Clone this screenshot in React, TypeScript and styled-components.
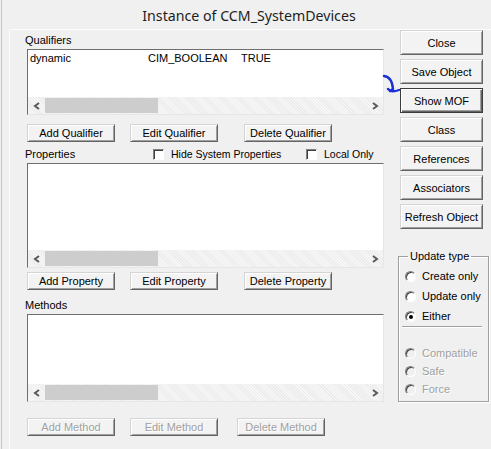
import styled, { createGlobalStyle, css } from "styled-components";

const GlobalStyle = createGlobalStyle`
  html, body {
    margin: 0;
    padding: 0;
    background: #f0f0f0;
  }
  * {
    box-sizing: border-box;
  }
`

const Window = styled.div`
  position: relative;
  width: 491px;
  height: 449px;
  background: #f0f0f0;
  border-left: 1px solid #c6c6c6;
  margin-left: 1px;
  font-family: "Liberation Sans", Arial, sans-serif;
  font-size: 11px;
  color: #000;
  overflow: hidden;
`

const Title = styled.div`
  height: 29px;
  display: flex;
  align-items: center;
  justify-content: center;
  padding-left: 4px;
  padding-top: 1px;
  font-family: "Noto Sans", "Open Sans", sans-serif;
  font-size: 14.2px;
  color: #1e1e1e;
`

const Frame = styled.div`
  display: flex;
  margin-left: 7px;
  height: 420px;
  border-top: 1px solid #fcfcfc;
  border-left: 1px solid #fcfcfc;
  padding-left: 17px;
`

const LeftColumn = styled.div`
  display: flex;
  flex-direction: column;
  width: 359px;
`

const SectionLabel = styled.div<{ $top: number }>`
  margin-top: ${p => p.$top}px;
  margin-left: -2px;
  height: 13px;
  line-height: 13px;
`

const HeaderRow = styled.div`
  display: grid;
  grid-template-columns: 126px 153px auto;
  align-items: center;
  margin-top: 6px;
  height: 13px;
  line-height: 13px;
`

const CheckLabel = styled.label`
  display: flex;
  align-items: center;
  gap: 7px;
  font-size: 10.5px;
  white-space: nowrap;
`

const CheckBox = styled.span`
  width: 11px;
  height: 11px;
  background: #fff;
  border: 1px solid;
  border-color: #808080 #fff #fff #808080;
  box-shadow: inset 1px 1px #404040;
`

const ListBox = styled.div<{ $height: number; $top: number }>`
  display: flex;
  flex-direction: column;
  margin-top: ${p => p.$top}px;
  width: 357px;
  height: ${p => p.$height}px;
  background: #fff;
  border: 1px solid;
  border-color: #6e6e6e #e6e6e6 #e6e6e6 #6e6e6e;
`

const ListBody = styled.div`
  flex: 1;
  padding: 1px 0 0 2px;
`

const ListRow = styled.div`
  display: grid;
  grid-template-columns: 118px 93px auto;
  height: 14px;
  line-height: 14px;
`

const ScrollBar = styled.div`
  display: flex;
  align-items: stretch;
  height: 17px;
  background: #f2f2f2;
  background-image: repeating-linear-gradient(45deg, #f7f7f7 0 1px, #ececec 1px 2px);
`

const ScrollArrow = styled.div`
  width: 17px;
  display: flex;
  align-items: center;
  justify-content: center;
`

const ScrollThumb = styled.div`
  width: 113px;
  margin: 1px 0;
  background: #cdcdcd;
`

const ScrollGap = styled.div`
  flex: 1;
`

const ButtonRow = styled.div<{ $top: number }>`
  display: flex;
  margin-top: ${p => p.$top}px;
  gap: 15px;
`

const raised = css`
  border: 1px solid;
  border-color: #d4d4d4 #646464 #646464 #d4d4d4;
  box-shadow: inset 1px 1px #fff, inset -1px -1px #a0a0a0;
  background: #f3f3f3;
`

const disabledText = css`
  color: #a0a0a0;
  text-shadow: 1px 1px 0 #fff;
`

const SmallButton = styled.button<{ $push?: number; $disabled?: boolean }>`
  ${raised}
  width: 88px;
  height: 18px;
  padding: 0 0 1px;
  margin-left: ${p => p.$push ?? 0}px;
  font: inherit;
  color: #000;
  white-space: nowrap;
  ${p => p.$disabled && disabledText}
`

const RightColumn = styled.div`
  display: flex;
  flex-direction: column;
  margin-left: 14px;
  gap: 4px;
`

const SideButton = styled.button<{ $default?: boolean }>`
  ${raised}
  width: 83px;
  height: 25px;
  padding: 0;
  font: inherit;
  color: #000;
  white-space: nowrap;
  ${p =>
    p.$default &&
    css`
      border: 1px solid #3c3c3c;
      box-shadow: inset 1px 1px #fff, inset -1px -1px #646464, inset -2px -2px #a0a0a0;
    `}
`

const Group = styled.fieldset`
  margin: 17px 0 0 -2px;
  width: 91px;
  padding: 3px 4px 3px 6px;
  border: 1px solid #a0a0a0;
  box-shadow: 1px 1px 0 #fff, inset 1px 1px 0 #fff;
`

const Legend = styled.legend`
  padding: 0 2px;
  margin-left: 3px;
  line-height: 13px;
  white-space: nowrap;
`

const RadioRow = styled.div<{ $height: number; $disabled?: boolean }>`
  display: flex;
  align-items: center;
  gap: 6px;
  height: ${p => p.$height}px;
  white-space: nowrap;
  ${p => p.$disabled && disabledText}
`

const RadioDot = styled.span<{ $checked?: boolean; $disabled?: boolean }>`
  position: relative;
  flex: none;
  width: 11px;
  height: 11px;
  border-radius: 50%;
  border: 1px solid;
  border-color: #808080 #fff #fff #808080;
  box-shadow: inset 1px 1px #404040;
  background: ${p => (p.$disabled ? "#f0f0f0" : "#fff")};

  ${p =>
    p.$checked &&
    css`
      &::after {
        content: "";
        position: absolute;
        left: 3px;
        top: 3px;
        width: 4px;
        height: 4px;
        border-radius: 50%;
        background: #000;
      }
    `}
`

const Separator = styled.div`
  margin: 0 0 16px -3px;
  width: 80px;
  height: 2px;
  border-top: 1px solid #a0a0a0;
  border-bottom: 1px solid #fff;
`

const Annotation = styled.svg`
  position: absolute;
  left: 379px;
  top: 72px;
`

const Chevron = ({ dir }: { dir: "left" | "right" }) => (
  <svg width="8" height="8" viewBox="0 0 8 8">
    <polyline
      points={dir === "left" ? "6,1 2,4 6,7" : "2,1 6,4 2,7"}
      fill="none"
      stroke="#5a5a5a"
      strokeWidth="2"
    />
  </svg>
)

const HScroll = () => (
  <ScrollBar>
    <ScrollArrow>
      <Chevron dir="left" />
    </ScrollArrow>
    <ScrollThumb />
    <ScrollGap />
    <ScrollArrow>
      <Chevron dir="right" />
    </ScrollArrow>
  </ScrollBar>
)

export const App: React.FC = () => {
  return (
    <Window>
      <GlobalStyle />
      <Title>Instance of CCM_SystemDevices</Title>
      <Frame>
        <LeftColumn>
          <SectionLabel $top={4}>Qualifiers</SectionLabel>
          <ListBox $top={2} $height={66}>
            <ListBody>
              <ListRow>
                <span>dynamic</span>
                <span>CIM_BOOLEAN</span>
                <span>TRUE</span>
              </ListRow>
            </ListBody>
            <HScroll />
          </ListBox>
          <ButtonRow $top={9}>
            <SmallButton>Add Qualifier</SmallButton>
            <SmallButton>Edit Qualifier</SmallButton>
            <SmallButton $push={11}>Delete Qualifier</SmallButton>
          </ButtonRow>

          <HeaderRow>
            <span style={{ marginLeft: -2 }}>Properties</span>
            <CheckLabel>
              <CheckBox />
              Hide System Properties
            </CheckLabel>
            <CheckLabel>
              <CheckBox />
              Local Only
            </CheckLabel>
          </HeaderRow>
          <ListBox $top={2} $height={105}>
            <ListBody />
            <HScroll />
          </ListBox>
          <ButtonRow $top={4}>
            <SmallButton>Add Property</SmallButton>
            <SmallButton>Edit Property</SmallButton>
            <SmallButton $push={11}>Delete Property</SmallButton>
          </ButtonRow>

          <SectionLabel $top={9}>Methods</SectionLabel>
          <ListBox $top={2} $height={88}>
            <ListBody />
            <HScroll />
          </ListBox>
          <ButtonRow $top={16}>
            <SmallButton $disabled>Add Method</SmallButton>
            <SmallButton $disabled>Edit Method</SmallButton>
            <SmallButton $disabled $push={4}>Delete Method</SmallButton>
          </ButtonRow>
        </LeftColumn>

        <RightColumn>
          <SideButton>Close</SideButton>
          <SideButton>Save Object</SideButton>
          <SideButton $default>Show MOF</SideButton>
          <SideButton>Class</SideButton>
          <SideButton>References</SideButton>
          <SideButton>Associators</SideButton>
          <SideButton>Refresh Object</SideButton>

          <Group>
            <Legend>Update type</Legend>
            <RadioRow $height={20}>
              <RadioDot />
              Create only
            </RadioRow>
            <RadioRow $height={20}>
              <RadioDot />
              Update only
            </RadioRow>
            <RadioRow $height={20}>
              <RadioDot $checked />
              Either
            </RadioRow>
            <Separator />
            <RadioRow $height={18} $disabled>
              <RadioDot $disabled />
              Compatible
            </RadioRow>
            <RadioRow $height={18} $disabled>
              <RadioDot $disabled />
              Safe
            </RadioRow>
            <RadioRow $height={18} $disabled>
              <RadioDot $disabled />
              Force
            </RadioRow>
          </Group>
        </RightColumn>
      </Frame>

      <Annotation width="22" height="26" viewBox="0 0 22 26">
        <path
          d="M3 4 Q11 5 12 17 M7 17 Q10 21 18 18 M12 17 L9 19"
          fill="none"
          stroke="#1a2fd6"
          strokeWidth="2.4"
          strokeLinecap="round"
        />
      </Annotation>
    </Window>
  );
}

export default App;
